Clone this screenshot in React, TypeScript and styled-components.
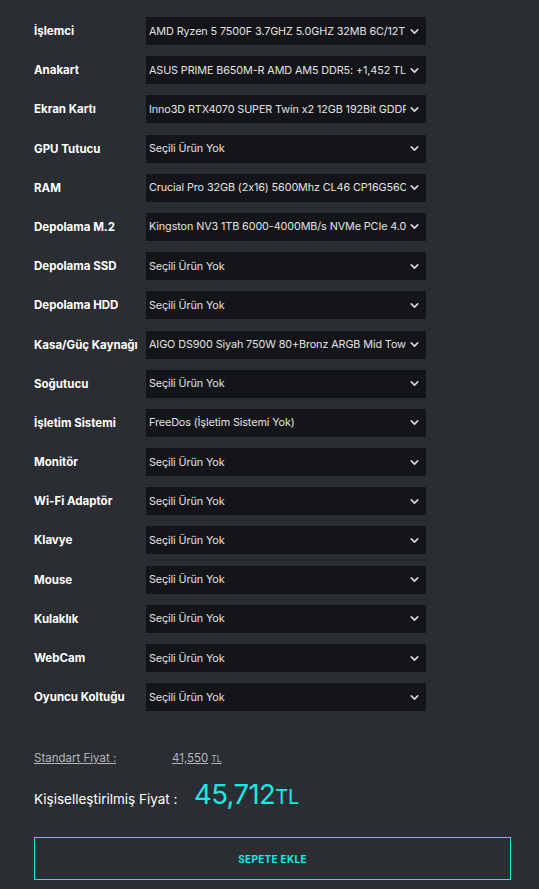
import React from "react";
import styled, { createGlobalStyle } from "styled-components";

const GlobalStyle = createGlobalStyle`
  html, body {
    margin: 0;
    padding: 0;
    background: #2a2d32;
  }
  body {
    font-family: Inter, "Noto Sans", sans-serif;
    font-feature-settings: "calt" 0;
  }
`;

const Page = styled.div`
  background: #2a2d32;
  min-height: 889px;
  padding: 17px 28px 8px 34px;
  box-sizing: border-box;
`;

const List = styled.div`
  display: flex;
  flex-direction: column;
  gap: 11.2px;
`;

const Row = styled.div`
  display: flex;
  align-items: center;
  height: 28px;
`;

const Label = styled.div`
  width: 112px;
  flex: none;
  color: #ffffff;
  font-size: 11.5px;
  font-weight: 700;
  white-space: nowrap;
  overflow: hidden;
`;

const Select = styled.div`
  width: 280px;
  height: 28px;
  box-sizing: border-box;
  background: #141518;
  display: flex;
  align-items: center;
  padding: 0 4px 0 3px;
  gap: 3px;
`;

const SelectText = styled.span`
  flex: 1;
  min-width: 0;
  color: #e2e2e2;
  font-size: 10.8px;
  letter-spacing: -0.1px;
  white-space: nowrap;
  overflow: hidden;
`;

const Chevron = styled.svg`
  flex: none;
  width: 11px;
  height: 11px;
  margin-right: 2px;
`;

const Prices = styled.div`
  margin-top: 40px;
  display: flex;
  flex-direction: column;
  gap: 12px;
`;

const StdRow = styled.div`
  display: flex;
  align-items: baseline;
  color: #b3b5b8;
  font-size: 11.5px;
  text-decoration: underline;
`;

const StdLabel = styled.span`
  width: 138px;
`;

const Small = styled.span`
  font-size: 8.5px;
  margin-left: 3px;
`;

const TotalRow = styled.div`
  display: flex;
  align-items: baseline;
  color: #ffffff;
  font-size: 13.5px;
`;

const TotalLabel = styled.span`
  width: 160px;
`;

const Total = styled.span`
  color: #19e8e8;
  font-size: 27.5px;
  letter-spacing: -0.6px;
`;

const TotalUnit = styled.span`
  font-size: 20px;
  letter-spacing: 0;
`;

const CartButton = styled.button`
  margin-top: 26px;
  width: 477px;
  height: 43px;
  background: transparent;
  border: 1.5px solid #19e8e8;
  color: #19e8e8;
  font-family: Inter, "Noto Sans", sans-serif;
  font-weight: 700;
  font-size: 10px;
  letter-spacing: 0.3px;
  cursor: pointer;
`;

const NONE = "Seçili Ürün Yok";

const parts: [string, string][] = [
  ["İşlemci", "AMD Ryzen 5 7500F 3.7GHZ 5.0GHZ 32MB 6C/12T"],
  ["Anakart", "ASUS PRIME B650M-R AMD AM5 DDR5:  +1,452 TL"],
  ["Ekran Kartı", "Inno3D RTX4070 SUPER Twin x2 12GB 192Bit GDDR6X"],
  ["GPU Tutucu", NONE],
  ["RAM", "Crucial Pro 32GB (2x16) 5600Mhz CL46 CP16G56C46U5"],
  ["Depolama M.2", "Kingston NV3 1TB 6000-4000MB/s NVMe PCIe 4.0 M.2"],
  ["Depolama SSD", NONE],
  ["Depolama HDD", NONE],
  ["Kasa/Güç Kaynağı", "AIGO DS900 Siyah 750W 80+Bronz ARGB Mid Tower Kasa"],
  ["Soğutucu", NONE],
  ["İşletim Sistemi", "FreeDos (İşletim Sistemi Yok)"],
  ["Monitör", NONE],
  ["Wi-Fi Adaptör", NONE],
  ["Klavye", NONE],
  ["Mouse", NONE],
  ["Kulaklık", NONE],
  ["WebCam", NONE],
  ["Oyuncu Koltuğu", NONE],
];

export default function App() {
  return (
    <Page>
      <GlobalStyle />
      <List>
        {parts.map(([label, value]) => (
          <Row key={label}>
            <Label>{label}</Label>
            <Select>
              <SelectText>{value}</SelectText>
              <Chevron viewBox="0 0 24 24" fill="none" stroke="#d8d8d8" strokeWidth={3.6} strokeLinecap="round" strokeLinejoin="round">
                <path d="M5 8.5l7 7 7-7" />
              </Chevron>
            </Select>
          </Row>
        ))}
      </List>
      <Prices>
        <StdRow>
          <StdLabel>Standart Fiyat :</StdLabel>
          <span>
            41,550<Small>TL</Small>
          </span>
        </StdRow>
        <TotalRow>
          <TotalLabel>Kişiselleştirilmiş Fiyat :</TotalLabel>
          <Total>
            45,712<TotalUnit>TL</TotalUnit>
          </Total>
        </TotalRow>
      </Prices>
      <CartButton>SEPETE EKLE</CartButton>
    </Page>
  );
}
